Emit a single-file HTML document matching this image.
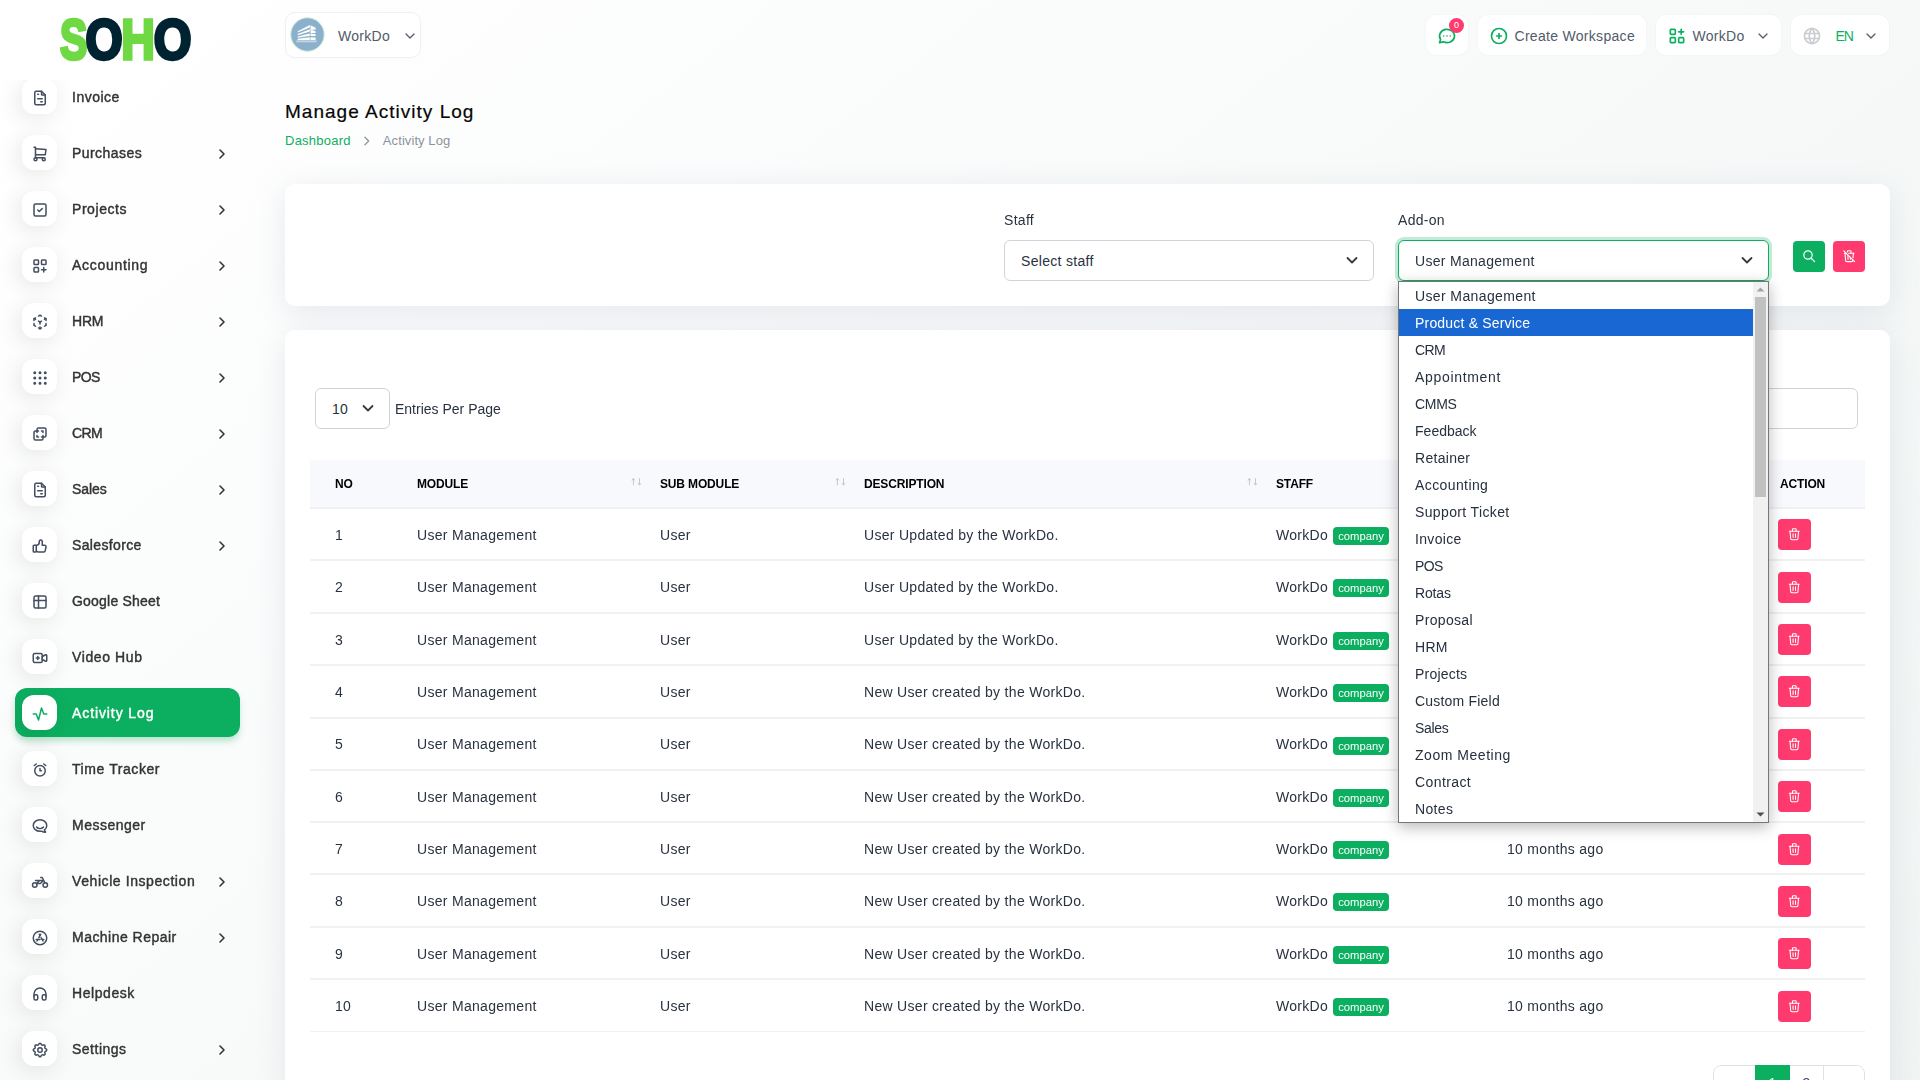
<!DOCTYPE html>
<html lang="en">
<head>
<meta charset="utf-8">
<title>Manage Activity Log</title>
<style>
*{box-sizing:border-box;margin:0;padding:0}
html,body{width:1920px;height:1080px;overflow:hidden}
body{font-family:"Liberation Sans","DejaVu Sans",sans-serif;font-size:14px;color:#293240;letter-spacing:.3px;
background:linear-gradient(141.55deg,rgba(240,244,243,0) 3.46%,#f0f4f3 99.86%),#fff;position:relative}
svg{display:block}
.abs{position:absolute}
/* sidebar */
#logo{position:absolute;left:56px;top:10px;width:140px;height:60px}
#nav{position:absolute;left:0;top:80px;width:280px;height:1000px;overflow:hidden;will-change:transform}
.it{position:absolute;left:15px;width:225px;height:49px;border-radius:12px;font-weight:normal;color:#333;font-size:14px;letter-spacing:0;-webkit-text-stroke:.42px currentColor}
.it .ic{position:absolute;left:7px;top:7px;width:35px;height:35px;border-radius:12px;background:#fff;box-shadow:-3px 4px 23px rgba(0,0,0,.1)}
.it .ic svg{position:absolute;left:8.7px;top:9.6px;width:18px;height:18px;fill:none;stroke:#434e60;stroke-width:2;stroke-linecap:round;stroke-linejoin:round}
.it .tx{position:absolute;left:57px;top:1px;line-height:49px;white-space:nowrap}
.it .ar{position:absolute;left:201px;top:19px;width:12px;height:14px;fill:none;stroke:#333;stroke-width:1.6;stroke-linecap:round;stroke-linejoin:round}
.it.on{background:#0CAF60;color:#fff;box-shadow:0 5px 7px -1px rgba(12,175,96,.3)}
.it.on .ic svg{stroke:#0CAF60}
/* header */
.hb{position:absolute;top:15px;height:40px;background:#fff;border-radius:10px;box-shadow:0 0 0 1px rgba(0,0,0,.015);color:#525b69;white-space:nowrap}
.hb span{position:absolute;top:1px;line-height:41px}
.hb svg{position:absolute;fill:none;stroke-linecap:round;stroke-linejoin:round}
/* cards */
.card{position:absolute;left:285px;width:1605px;background:#fff;border-radius:10px;box-shadow:0 6px 30px rgba(182,186,203,.3)}
.sel{position:absolute;height:41px;border:1px solid #ced4da;border-radius:6px;background:#fff;line-height:41px;padding-left:16px;white-space:nowrap}
.sel svg{position:absolute;top:15px;width:12px;height:9px;fill:none;stroke:#343a40;stroke-width:1.8;stroke-linecap:round;stroke-linejoin:round}
.btn{position:absolute;border-radius:4px}
.btn svg{position:absolute;fill:none;stroke:#fff;stroke-linecap:round;stroke-linejoin:round}

.th{position:absolute;top:131px;line-height:47px;font-size:12px;font-weight:bold;color:#000;white-space:nowrap;letter-spacing:-.15px}
.srt{position:absolute;top:147.4px;width:11px;height:10px;fill:none;stroke:#c6c8ce;stroke-width:1;stroke-linecap:round;stroke-linejoin:round}
.tr{position:absolute;left:25px;width:1555px;height:52.33px;border-bottom:2px solid #f1f1f1}
.tr span{position:absolute;top:0;line-height:52px;white-space:nowrap}
.tr.u span{top:-1px}
.tr b{position:absolute;left:1023px;top:18px;width:56px;height:18px;border-radius:4px;background:#0CAF60;color:#fff;font-size:11.25px;font-weight:normal;line-height:18px;text-align:center;letter-spacing:0}
.tr i{position:absolute;left:1468px;top:10.6px;width:33px;height:31px;border-radius:4px;background:#ff3a6e}
.tr i svg{position:absolute;left:9.2px;top:8.2px;width:14.6px;height:14.6px;fill:none;stroke:#fff;stroke-width:1.8;stroke-linecap:round;stroke-linejoin:round}

.pg{position:absolute;top:0;height:36px;line-height:37px;text-align:center;font-size:14px}
#dd{position:absolute;left:1398px;top:281px;width:371px;height:542px;border:1px solid #767676;background:#fff;box-shadow:0 4px 14px rgba(0,0,0,.28);padding-right:15px}
.op{height:27px;line-height:29px;padding-left:16px;white-space:nowrap;color:#26303f}
.op.hl{background:#1967d2;color:#fff}
#sbar{position:absolute;right:0;top:0;width:15px;height:540px;background:#f1f1f1}
#thumb{position:absolute;left:2px;top:15px;width:11px;height:200px;background:#c1c1c1}
</style>
</head>
<body>
<svg id="logo" viewBox="0 0 140 60" text-rendering="geometricPrecision" font-family="Liberation Sans, sans-serif" font-weight="bold" font-size="56.4" stroke-width="3.4" stroke-linejoin="miter">
<text transform="translate(4.1,49) scale(.726,1.003)" fill="#6fd943" stroke="#6fd943">S</text>
<text transform="translate(29.6,49) scale(.846,1.003)" fill="#002332" stroke="#002332">O</text>
<text transform="translate(65.2,49) scale(.825,1.003)" fill="#6fd943" stroke="#6fd943">H</text>
<text transform="translate(97.8,49) scale(.86,1.003)" fill="#002332" stroke="#002332">O</text>
</svg>
<div id="nav">
<div class="it" style="top:-8px"><div class="ic"><svg viewBox="0 0 24 24" ><path d="M14 3v4a1 1 0 0 0 1 1h4"/><path d="M17 21h-10a2 2 0 0 1 -2 -2v-14a2 2 0 0 1 2 -2h7l5 5v11a2 2 0 0 1 -2 2z"/><path d="M9 7h1"/><path d="M9 13h6"/><path d="M13 17h2"/></svg></div><div class="tx" style="letter-spacing:0.5px">Invoice</div></div>
<div class="it" style="top:48px"><div class="ic"><svg viewBox="0 0 24 24" ><circle cx="6" cy="19" r="2"/><circle cx="17" cy="19" r="2"/><path d="M17 17h-11v-14h-2"/><path d="M6 5l14 1l-1 7h-13"/></svg></div><div class="tx" style="letter-spacing:0.44px">Purchases</div><svg class="ar" viewBox="0 0 12 14"><path d="M4 3l4 4l-4 4"/></svg></div>
<div class="it" style="top:104px"><div class="ic"><svg viewBox="0 0 24 24" ><rect x="4" y="4" width="16" height="16" rx="2"/><path d="M9 12l2 2l4 -4"/></svg></div><div class="tx" style="letter-spacing:0.56px">Projects</div><svg class="ar" viewBox="0 0 12 14"><path d="M4 3l4 4l-4 4"/></svg></div>
<div class="it" style="top:160px"><div class="ic"><svg viewBox="0 0 24 24" ><rect x="4" y="4" width="6" height="6" rx="1"/><rect x="14" y="4" width="6" height="6" rx="1"/><rect x="4" y="14" width="6" height="6" rx="1"/><path d="M14 17h6m-3 -3v6"/></svg></div><div class="tx" style="letter-spacing:0.7px">Accounting</div><svg class="ar" viewBox="0 0 12 14"><path d="M4 3l4 4l-4 4"/></svg></div>
<div class="it" style="top:216px"><div class="ic"><svg viewBox="0 0 24 24" ><path d="M6 17.6l-2 -1.1v-2.5"/><path d="M4 10v-2.5l2 -1.1"/><path d="M10 4.1l2 -1.1l2 1.1"/><path d="M18 6.4l2 1.1v2.5"/><path d="M20 14v2.5l-2 1.12"/><path d="M14 19.9l-2 1.1l-2 -1.1"/><path d="M12 12l2 -1.1"/><path d="M18 8.6l2 -1.1"/><path d="M12 12v2.5"/><path d="M12 18.5v2.5"/><path d="M12 12l-2 -1.12"/><path d="M6 8.6l-2 -1.1"/></svg></div><div class="tx" style="letter-spacing:-0.18px">HRM</div><svg class="ar" viewBox="0 0 12 14"><path d="M4 3l4 4l-4 4"/></svg></div>
<div class="it" style="top:272px"><div class="ic"><svg viewBox="0 0 24 24" ><circle cx="5" cy="5" r="1"/><circle cx="12" cy="5" r="1"/><circle cx="19" cy="5" r="1"/><circle cx="5" cy="12" r="1"/><circle cx="12" cy="12" r="1"/><circle cx="19" cy="12" r="1"/><circle cx="5" cy="19" r="1"/><circle cx="12" cy="19" r="1"/><circle cx="19" cy="19" r="1"/></svg></div><div class="tx" style="letter-spacing:-0.6px">POS</div><svg class="ar" viewBox="0 0 12 14"><path d="M4 3l4 4l-4 4"/></svg></div>
<div class="it" style="top:328px"><div class="ic"><svg viewBox="0 0 24 24" ><path d="M16 16v2a2 2 0 0 1 -2 2h-8a2 2 0 0 1 -2 -2v-8a2 2 0 0 1 2 -2h2v-2a2 2 0 0 1 2 -2h8a2 2 0 0 1 2 2v8a2 2 0 0 1 -2 2h-2"/><path d="M10 8h-2v2"/><path d="M8 14v2h2"/><path d="M14 8h2v2"/><path d="M16 14v2h-2"/></svg></div><div class="tx" style="letter-spacing:-0.6px">CRM</div><svg class="ar" viewBox="0 0 12 14"><path d="M4 3l4 4l-4 4"/></svg></div>
<div class="it" style="top:384px"><div class="ic"><svg viewBox="0 0 24 24" ><path d="M14 3v4a1 1 0 0 0 1 1h4"/><path d="M17 21h-10a2 2 0 0 1 -2 -2v-14a2 2 0 0 1 2 -2h7l5 5v11a2 2 0 0 1 -2 2z"/><path d="M9 7h1"/><path d="M9 13h6"/><path d="M13 17h2"/></svg></div><div class="tx" style="letter-spacing:-0.06px">Sales</div><svg class="ar" viewBox="0 0 12 14"><path d="M4 3l4 4l-4 4"/></svg></div>
<div class="it" style="top:440px"><div class="ic"><svg viewBox="0 0 24 24" ><path d="M7 11v8a1 1 0 0 1 -1 1h-2a1 1 0 0 1 -1 -1v-7a1 1 0 0 1 1 -1h3a4 4 0 0 0 4 -4v-1a2 2 0 0 1 4 0v5h3a2 2 0 0 1 2 2l-1 5a2 3 0 0 1 -2 2h-7a3 3 0 0 1 -3 -3"/></svg></div><div class="tx" style="letter-spacing:0.35px">Salesforce</div><svg class="ar" viewBox="0 0 12 14"><path d="M4 3l4 4l-4 4"/></svg></div>
<div class="it" style="top:496px"><div class="ic"><svg viewBox="0 0 24 24" ><rect x="4" y="4" width="16" height="16" rx="2"/><path d="M4 10h16"/><path d="M10 4v16"/></svg></div><div class="tx" style="letter-spacing:0.21px">Google Sheet</div></div>
<div class="it" style="top:552px"><div class="ic"><svg viewBox="0 0 24 24" ><path d="M15 10l4.553 -2.276a1 1 0 0 1 1.447 .894v6.764a1 1 0 0 1 -1.447 .894l-4.553 -2.276v-4z"/><rect x="3" y="6" width="12" height="12" rx="2"/><path d="M7 12h4"/><path d="M9 10v4"/></svg></div><div class="tx" style="letter-spacing:0.61px">Video Hub</div></div>
<div class="it on" style="top:608px"><div class="ic"><svg viewBox="0 0 24 24" ><path d="M3 12h4l3 8l4 -16l3 8h4"/></svg></div><div class="tx" style="letter-spacing:0.9px">Activity Log</div></div>
<div class="it" style="top:664px"><div class="ic"><svg viewBox="0 0 24 24" ><circle cx="12" cy="13" r="7"/><path d="M12 10v3h2"/><path d="M7 4l-2.75 2"/><path d="M17 4l2.75 2"/></svg></div><div class="tx" style="letter-spacing:0.58px">Time Tracker</div></div>
<div class="it" style="top:720px"><div class="ic"><svg viewBox="0 0 24 24" ><path d="M17.802 17.292s.077 -.055 .2 -.149c1.843 -1.425 3 -3.49 3 -5.789c0 -4.286 -4.03 -7.764 -9 -7.764c-4.97 0 -9 3.478 -9 7.764c0 4.288 4.03 7.646 9 7.646c.424 0 1.12 -.028 2.088 -.084c1.262 .820 3.104 1.493 4.716 1.493c.499 0 .734 -.410 .414 -.828c-.486 -.596 -1.156 -1.551 -1.416 -2.29z"/><path d="M7.5 13.5c2.5 2.5 6.5 2.5 9 0"/></svg></div><div class="tx" style="letter-spacing:0.5px">Messenger</div></div>
<div class="it" style="top:776px"><div class="ic"><svg viewBox="0 0 24 24" ><circle cx="5" cy="16" r="3"/><circle cx="19" cy="16" r="3"/><path d="M7.5 14h5l4 -4h-10.5m1.5 4l4 -4"/><path d="M13 6h2l1.5 3l2 4"/></svg></div><div class="tx" style="letter-spacing:0.58px">Vehicle Inspection</div><svg class="ar" viewBox="0 0 12 14"><path d="M4 3l4 4l-4 4"/></svg></div>
<div class="it" style="top:832px"><div class="ic"><svg viewBox="0 0 24 24" ><circle cx="12" cy="12" r="9"/><path d="M8 16l1.106 -1.99m1.4 -2.522l2.494 -4.488"/><path d="M7 14h5m2.9 0h2.1"/><path d="M16 16l-2.51 -4.518m-1.487 -2.677l-1 -1.805"/></svg></div><div class="tx" style="letter-spacing:0.47px">Machine Repair</div><svg class="ar" viewBox="0 0 12 14"><path d="M4 3l4 4l-4 4"/></svg></div>
<div class="it" style="top:888px"><div class="ic"><svg viewBox="0 0 24 24" ><rect x="4" y="13" rx="2" width="5" height="7"/><rect x="15" y="13" rx="2" width="5" height="7"/><path d="M4 15v-3a8 8 0 0 1 16 0v3"/></svg></div><div class="tx" style="letter-spacing:0.56px">Helpdesk</div></div>
<div class="it" style="top:944px"><div class="ic"><svg viewBox="0 0 24 24" ><path d="M10.325 4.317c.426 -1.756 2.924 -1.756 3.35 0a1.724 1.724 0 0 0 2.573 1.066c1.543 -.940 3.31 .826 2.37 2.37a1.724 1.724 0 0 0 1.065 2.572c1.756 .426 1.756 2.924 0 3.35a1.724 1.724 0 0 0 -1.066 2.573c.940 1.543 -.826 3.31 -2.37 2.37a1.724 1.724 0 0 0 -2.572 1.065c-.426 1.756 -2.924 1.756 -3.35 0a1.724 1.724 0 0 0 -2.573 -1.066c-1.543 .940 -3.31 -.826 -2.37 -2.37a1.724 1.724 0 0 0 -1.065 -2.572c-1.756 -.426 -1.756 -2.924 0 -3.35a1.724 1.724 0 0 0 1.066 -2.573c-.940 -1.543 .826 -3.31 2.37 -2.37c1 .608 2.296 .070 2.572 -1.065z"/><circle cx="12" cy="12" r="3"/></svg></div><div class="tx" style="letter-spacing:0.5px">Settings</div><svg class="ar" viewBox="0 0 12 14"><path d="M4 3l4 4l-4 4"/></svg></div>
</div>
<div class="hb" style="left:285px;top:12px;width:136px;height:46px;border:1px solid #f1f1f1;box-shadow:0 1px 4px rgba(0,0,0,.02)">
<svg style="left:3.8px;top:3.9px;width:35px;height:35px" viewBox="0 0 35 35"><circle cx="17.5" cy="17.5" r="16.7" fill="#8bb0cc" stroke="#c9ecd9" stroke-width="1"/>
<g fill="#fff" stroke="none"><path d="M7.8 14.2L19.8 8.05V10.450000000000001L7.6 15.5z"/><path d="M20.5 8.3L25.6 10.8V12.700000000000001H20.5V10.700000000000001z"/><path d="M7.8 16.9L19.8 12.2V14.6L7.6 18.2z"/><path d="M20.5 12.5L25.6 14.2V16.099999999999998H20.5V14.9z"/><path d="M7.8 19.4L19.8 16.4V18.799999999999997L7.6 20.7z"/><path d="M20.5 16.4L25.6 17.2V19.099999999999998H20.5V18.799999999999997z"/><path d="M7.8 21.7L19.8 20.3V23.05L7.6 23.05z"/><path d="M20.5 20.3L25.6 20.55V23.05H20.5V23.05z"/><path d="M6.4 23.4h20.3v1.9h-20.3z" fill="#c3d5e4"/></g></svg>
<span style="left:52px;top:0;line-height:47px">WorkDo</span><svg viewBox="0 0 24 24" style="left:115.5px;top:15px;width:16px;height:16px;stroke:#525b69;stroke-width:1.9"><path d="M6 9l6 6l6 -6"/></svg></div>
<div class="hb" style="left:1426px;width:42px"><svg viewBox="0 0 24 24" style="left:11px;top:10.5px;width:20px;height:20px;stroke:#0CAF60;stroke-width:2"><path d="M3 20l1.3 -3.9a9 8 0 1 1 3.4 2.9l-4.7 1"/><path d="M12 12v.010"/><path d="M8 12v.010"/><path d="M16 12v.010"/></svg><div style="position:absolute;left:23px;top:2.5px;width:15px;height:15px;border-radius:50%;background:#ff3a6e;color:#fff;font-size:9px;line-height:15px;text-align:center;letter-spacing:0">0</div></div>
<div class="hb" style="left:1478px;width:168px"><svg viewBox="0 0 24 24" style="left:11px;top:11px;width:20px;height:20px;stroke:#0CAF60;stroke-width:2"><circle cx="12" cy="12" r="9"/><path d="M9 12h6"/><path d="M12 9v6"/></svg><span style="left:36.5px">Create Workspace</span></div>
<div class="hb" style="left:1656px;width:125px"><svg viewBox="0 0 24 24" style="left:11px;top:10.5px;width:20px;height:20px;stroke:#0CAF60;stroke-width:2"><rect x="4" y="4" width="6" height="6" rx="1"/><rect x="4" y="14" width="6" height="6" rx="1"/><rect x="14" y="14" width="6" height="6" rx="1"/><path d="M14 7h6m-3 -3v6"/></svg><span style="left:36.5px">WorkDo</span><svg viewBox="0 0 24 24" style="left:99px;top:12.5px;width:16px;height:16px;stroke:#525b69;stroke-width:1.9"><path d="M6 9l6 6l6 -6"/></svg></div>
<div class="hb" style="left:1791px;width:98px"><svg viewBox="0 0 24 24" style="left:11px;top:10.5px;width:20px;height:20px;stroke:#c9ccd1;stroke-width:2"><circle cx="12" cy="12" r="9"/><path d="M3.6 9h16.8"/><path d="M3.6 15h16.8"/><path d="M11.5 3a17 17 0 0 0 0 18"/><path d="M12.5 3a17 17 0 0 1 0 18"/></svg><span style="left:44.5px;color:#0CAF60;letter-spacing:-1px">EN</span><svg viewBox="0 0 24 24" style="left:72px;top:12.5px;width:16px;height:16px;stroke:#525b69;stroke-width:1.9"><path d="M6 9l6 6l6 -6"/></svg></div>
<div class="abs" style="left:285px;top:99px;font-size:19px;line-height:26px;color:#060606;letter-spacing:1.02px;-webkit-text-stroke:.2px #060606;white-space:nowrap" id="ttl">Manage Activity Log</div>
<div class="abs" style="left:285px;top:131px;font-size:13px;line-height:20px;white-space:nowrap;letter-spacing:.25px"><span style="color:#0CAF60" id="bc1">Dashboard</span><svg viewBox="0 0 12 14" style="display:inline-block;width:10px;height:12px;margin:0 11px 0 11px;vertical-align:-1.5px;fill:none;stroke:#8c939d;stroke-width:1.5;stroke-linecap:round;stroke-linejoin:round"><path d="M3.5 2.5l4.5 4.5l-4.5 4.5"/></svg><span style="color:#8c939d;letter-spacing:.08px" id="bc2">Activity Log</span></div>
<div class="card" style="top:184px;height:122px">
<div class="abs" style="left:719px;top:26px;line-height:21px">Staff</div>
<div class="sel" style="left:719px;top:56px;width:370px">Select staff<svg viewBox="0 0 12 9" style="left:341px"><path d="M1.5 2l4.5 4.5l4.5 -4.5"/></svg></div>
<div class="abs" style="left:1113px;top:26px;line-height:21px">Add-on</div>
<div class="sel" style="left:1113px;top:56px;width:371px;border-color:#0CAF60;box-shadow:0 0 0 3px rgba(12,175,96,.25)">User Management<svg viewBox="0 0 12 9" style="left:342px"><path d="M1.5 2l4.5 4.5l4.5 -4.5"/></svg></div>
<div class="btn" style="left:1508px;top:57px;width:32px;height:31px;background:#0CAF60"><svg viewBox="0 0 24 24" style="left:8.8px;top:8.3px;width:14.4px;height:14.4px;stroke-width:2"><circle cx="10" cy="10" r="7"/><path d="M21 21l-6 -6"/></svg></div>
<div class="btn" style="left:1548px;top:57px;width:32px;height:31px;background:#ff3a6e"><svg viewBox="0 0 24 24" style="left:8.7px;top:8.4px;width:14.4px;height:14.4px;stroke-width:1.9"><path d="M3 3l18 18"/><path d="M4 7h3m4 0h9"/><path d="M10 11v6"/><path d="M14 14v3"/><path d="M5 7l1 12a2 2 0 0 0 2 2h8a2 2 0 0 0 2 -2l.077 -.923"/><path d="M18.384 14.373l.616 -7.373"/><path d="M9 5v-1a1 1 0 0 1 1 -1h4a1 1 0 0 1 1 1v3"/></svg></div>
</div>
<div class="card" style="top:330px;height:800px">
<div class="sel" style="left:30px;top:58px;width:74.5px;padding-left:16px">10<svg viewBox="0 0 12 9" style="left:46px"><path d="M1.5 2l4.5 4.5l4.5 -4.5"/></svg></div>
<div class="abs" style="left:110px;top:59px;line-height:41px;white-space:nowrap;letter-spacing:0" id="epp">Entries Per Page</div>
<div class="sel" style="left:1370px;top:58px;width:203px"></div>
<div class="abs" style="left:25px;top:130px;width:1555px;height:49px;background:#f8f9fd;border-bottom:2px solid #f1f1f1"></div>
<div class="th" style="left:50px">NO</div>
<div class="th" style="left:132px">MODULE</div>
<svg class="srt" style="left:346px" viewBox="0 0 11 10"><path d="M2.4 8v-6.5m-1.3 1.6l1.3 -1.6l1.3 1.6M8.5 1.5v6.5m-1.3 -1.6l1.3 1.6l1.3 -1.6"/></svg>
<div class="th" style="left:375px">SUB MODULE</div>
<svg class="srt" style="left:550px" viewBox="0 0 11 10"><path d="M2.4 8v-6.5m-1.3 1.6l1.3 -1.6l1.3 1.6M8.5 1.5v6.5m-1.3 -1.6l1.3 1.6l1.3 -1.6"/></svg>
<div class="th" style="left:579px">DESCRIPTION</div>
<svg class="srt" style="left:962px" viewBox="0 0 11 10"><path d="M2.4 8v-6.5m-1.3 1.6l1.3 -1.6l1.3 1.6M8.5 1.5v6.5m-1.3 -1.6l1.3 1.6l1.3 -1.6"/></svg>
<div class="th" style="left:991px">STAFF</div>
<div class="th" style="left:1495px">ACTION</div>
<div class="tr" style="top:179px;height:52px;border-bottom-width:2px"><span style="left:25px">1</span><span style="left:107px">User Management</span><span style="left:350px">User</span><span style="left:554px">User Updated by the WorkDo.</span><span style="left:966px">WorkDo</span><b>company</b><span style="left:1197px">10 months ago</span><i style="top:10px"><svg viewBox="0 0 24 24" ><path d="M4 7h16"/><path d="M10 11v6"/><path d="M14 11v6"/><path d="M5 7l1 12a2 2 0 0 0 2 2h8a2 2 0 0 0 2 -2l1 -12"/><path d="M9 7v-3a1 1 0 0 1 1 -1h4a1 1 0 0 1 1 1v3"/></svg></i></div>
<div class="tr" style="top:231px;height:53px;border-bottom-width:2px"><span style="left:25px">2</span><span style="left:107px">User Management</span><span style="left:350px">User</span><span style="left:554px">User Updated by the WorkDo.</span><span style="left:966px">WorkDo</span><b>company</b><span style="left:1197px">10 months ago</span><i style="top:11px"><svg viewBox="0 0 24 24" ><path d="M4 7h16"/><path d="M10 11v6"/><path d="M14 11v6"/><path d="M5 7l1 12a2 2 0 0 0 2 2h8a2 2 0 0 0 2 -2l1 -12"/><path d="M9 7v-3a1 1 0 0 1 1 -1h4a1 1 0 0 1 1 1v3"/></svg></i></div>
<div class="tr" style="top:284px;height:52px;border-bottom-width:2px"><span style="left:25px">3</span><span style="left:107px">User Management</span><span style="left:350px">User</span><span style="left:554px">User Updated by the WorkDo.</span><span style="left:966px">WorkDo</span><b>company</b><span style="left:1197px">10 months ago</span><i style="top:10px"><svg viewBox="0 0 24 24" ><path d="M4 7h16"/><path d="M10 11v6"/><path d="M14 11v6"/><path d="M5 7l1 12a2 2 0 0 0 2 2h8a2 2 0 0 0 2 -2l1 -12"/><path d="M9 7v-3a1 1 0 0 1 1 -1h4a1 1 0 0 1 1 1v3"/></svg></i></div>
<div class="tr" style="top:336px;height:53px;border-bottom-width:2px"><span style="left:25px">4</span><span style="left:107px">User Management</span><span style="left:350px">User</span><span style="left:554px">New User created by the WorkDo.</span><span style="left:966px">WorkDo</span><b>company</b><span style="left:1197px">10 months ago</span><i style="top:10px"><svg viewBox="0 0 24 24" ><path d="M4 7h16"/><path d="M10 11v6"/><path d="M14 11v6"/><path d="M5 7l1 12a2 2 0 0 0 2 2h8a2 2 0 0 0 2 -2l1 -12"/><path d="M9 7v-3a1 1 0 0 1 1 -1h4a1 1 0 0 1 1 1v3"/></svg></i></div>
<div class="tr u" style="top:389px;height:52px;border-bottom-width:2px"><span style="left:25px">5</span><span style="left:107px">User Management</span><span style="left:350px">User</span><span style="left:554px">New User created by the WorkDo.</span><span style="left:966px">WorkDo</span><b>company</b><span style="left:1197px">10 months ago</span><i style="top:10px"><svg viewBox="0 0 24 24" ><path d="M4 7h16"/><path d="M10 11v6"/><path d="M14 11v6"/><path d="M5 7l1 12a2 2 0 0 0 2 2h8a2 2 0 0 0 2 -2l1 -12"/><path d="M9 7v-3a1 1 0 0 1 1 -1h4a1 1 0 0 1 1 1v3"/></svg></i></div>
<div class="tr" style="top:441px;height:52px;border-bottom-width:2px"><span style="left:25px">6</span><span style="left:107px">User Management</span><span style="left:350px">User</span><span style="left:554px">New User created by the WorkDo.</span><span style="left:966px">WorkDo</span><b>company</b><span style="left:1197px">10 months ago</span><i style="top:10px"><svg viewBox="0 0 24 24" ><path d="M4 7h16"/><path d="M10 11v6"/><path d="M14 11v6"/><path d="M5 7l1 12a2 2 0 0 0 2 2h8a2 2 0 0 0 2 -2l1 -12"/><path d="M9 7v-3a1 1 0 0 1 1 -1h4a1 1 0 0 1 1 1v3"/></svg></i></div>
<div class="tr" style="top:493px;height:52px;border-bottom-width:2px"><span style="left:25px">7</span><span style="left:107px">User Management</span><span style="left:350px">User</span><span style="left:554px">New User created by the WorkDo.</span><span style="left:966px">WorkDo</span><b>company</b><span style="left:1197px">10 months ago</span><i style="top:11px"><svg viewBox="0 0 24 24" ><path d="M4 7h16"/><path d="M10 11v6"/><path d="M14 11v6"/><path d="M5 7l1 12a2 2 0 0 0 2 2h8a2 2 0 0 0 2 -2l1 -12"/><path d="M9 7v-3a1 1 0 0 1 1 -1h4a1 1 0 0 1 1 1v3"/></svg></i></div>
<div class="tr" style="top:545px;height:53px;border-bottom-width:2px"><span style="left:25px">8</span><span style="left:107px">User Management</span><span style="left:350px">User</span><span style="left:554px">New User created by the WorkDo.</span><span style="left:966px">WorkDo</span><b>company</b><span style="left:1197px">10 months ago</span><i style="top:11px"><svg viewBox="0 0 24 24" ><path d="M4 7h16"/><path d="M10 11v6"/><path d="M14 11v6"/><path d="M5 7l1 12a2 2 0 0 0 2 2h8a2 2 0 0 0 2 -2l1 -12"/><path d="M9 7v-3a1 1 0 0 1 1 -1h4a1 1 0 0 1 1 1v3"/></svg></i></div>
<div class="tr" style="top:598px;height:52px;border-bottom-width:2px"><span style="left:25px">9</span><span style="left:107px">User Management</span><span style="left:350px">User</span><span style="left:554px">New User created by the WorkDo.</span><span style="left:966px">WorkDo</span><b>company</b><span style="left:1197px">10 months ago</span><i style="top:10px"><svg viewBox="0 0 24 24" ><path d="M4 7h16"/><path d="M10 11v6"/><path d="M14 11v6"/><path d="M5 7l1 12a2 2 0 0 0 2 2h8a2 2 0 0 0 2 -2l1 -12"/><path d="M9 7v-3a1 1 0 0 1 1 -1h4a1 1 0 0 1 1 1v3"/></svg></i></div>
<div class="tr" style="top:650px;height:52px;border-bottom-width:1px"><span style="left:25px">10</span><span style="left:107px">User Management</span><span style="left:350px">User</span><span style="left:554px">New User created by the WorkDo.</span><span style="left:966px">WorkDo</span><b>company</b><span style="left:1197px">10 months ago</span><i style="top:11px"><svg viewBox="0 0 24 24" ><path d="M4 7h16"/><path d="M10 11v6"/><path d="M14 11v6"/><path d="M5 7l1 12a2 2 0 0 0 2 2h8a2 2 0 0 0 2 -2l1 -12"/><path d="M9 7v-3a1 1 0 0 1 1 -1h4a1 1 0 0 1 1 1v3"/></svg></i></div>
<div class="abs" style="left:1428px;top:735px;width:152px;height:40px;border-radius:8px;overflow:hidden;background:#fff"><div style="position:absolute;left:0;top:0;width:152px;height:40px;border:1px solid #dee2e6;border-radius:8px"></div><div style="position:absolute;left:42px;top:0;width:35px;height:40px;background:#0CAF60"></div><div style="position:absolute;left:110px;top:0;width:1px;height:40px;background:#dee2e6"></div><div class="pg" style="left:0;width:42px;color:#293240;font-size:24px;line-height:39px">&lsaquo;</div><div class="pg" style="left:42px;width:35px;color:#fff">1</div><div class="pg" style="left:77px;width:33px;color:#3b3f9a;font-size:14.5px;line-height:36px">2</div><div class="pg" style="left:110px;width:42px;color:#293240;font-size:24px;line-height:39px">&rsaquo;</div></div>
</div>
<div id="dd">
<div class="op" style="letter-spacing:0.38px">User Management</div>
<div class="op hl" style="letter-spacing:0.19px">Product &amp; Service</div>
<div class="op" style="letter-spacing:-0.6px">CRM</div>
<div class="op" style="letter-spacing:0.68px">Appointment</div>
<div class="op" style="letter-spacing:-0.3px">CMMS</div>
<div class="op" style="letter-spacing:0.02px">Feedback</div>
<div class="op" style="letter-spacing:0.3px">Retainer</div>
<div class="op" style="letter-spacing:0.4px">Accounting</div>
<div class="op" style="letter-spacing:0.36px">Support Ticket</div>
<div class="op" style="letter-spacing:0.33px">Invoice</div>
<div class="op" style="letter-spacing:-0.6px">POS</div>
<div class="op" style="letter-spacing:-0.15px">Rotas</div>
<div class="op" style="letter-spacing:0.33px">Proposal</div>
<div class="op" style="letter-spacing:0.3px">HRM</div>
<div class="op" style="letter-spacing:0.2px">Projects</div>
<div class="op" style="letter-spacing:0.2px">Custom Field</div>
<div class="op" style="letter-spacing:-0.34px">Sales</div>
<div class="op" style="letter-spacing:0.53px">Zoom Meeting</div>
<div class="op" style="letter-spacing:0.4px">Contract</div>
<div class="op" style="letter-spacing:0.34px">Notes</div>
<div id="sbar"><div id="thumb"></div><svg viewBox="0 0 15 15" style="position:absolute;left:0;top:0;width:15px;height:15px"><path d="M3.5 9.5l4 -4l4 4z" fill="#a3a3a3"/></svg><svg viewBox="0 0 15 15" style="position:absolute;left:0;bottom:0;width:15px;height:15px"><path d="M3.5 5.5l4 4l4 -4z" fill="#505050"/></svg></div>
</div>
</body>
</html>
